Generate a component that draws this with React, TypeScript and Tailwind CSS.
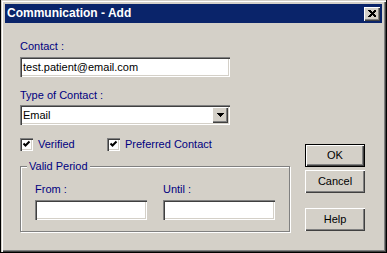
const sunken =
  "bg-white shadow-[inset_1px_1px_0_#808080,inset_2px_2px_0_#404040,inset_-1px_-1px_0_#ffffff,inset_-2px_-2px_0_#d4d0c8]";
const raised =
  "bg-[#d4d0c8] shadow-[inset_1px_1px_0_#ffffff,inset_-1px_-1px_0_#404040,inset_-2px_-2px_0_#808080]";

function TextField({ value, className }: { value?: string; className: string }) {
  return (
    <div className={`${sunken} ${className} h-[20px] flex items-center px-[3px] text-[11px] text-black`}>
      {value}
    </div>
  );
}

function CheckBox({ label, className }: { label: string; className?: string }) {
  return (
    <div className={`flex items-center gap-[5px] h-[13px] ${className ?? ""}`}>
      <div className={`${sunken} w-[13px] h-[13px] flex items-center justify-center`}>
        <svg width="9" height="9" viewBox="0 0 9 9">
          <path d="M1.5 3.5 L3.5 5.5 L7.5 1.5" fill="none" stroke="#000" strokeWidth="2" />
        </svg>
      </div>
      <span className="text-[11px] leading-[13px] text-[#000080]">{label}</span>
    </div>
  );
}

function Button({ label, isDefault }: { label: string; isDefault?: boolean }) {
  return (
    <div className={`w-[60px] h-[23px] ${isDefault ? "border border-black" : ""}`}>
      <div className={`${raised} w-full h-full flex items-center justify-center text-[11px] text-black`}>
        {label}
      </div>
    </div>
  );
}

export default function App() {
  return (
    <div
      className="w-[387px] h-[253px] border-l border-r border-b border-black bg-[#d4d0c8] text-[11px] leading-[13px]"
      style={{ fontFamily: '"Liberation Sans", Arial, sans-serif' }}
    >
      <div className="h-full p-[2px] shadow-[inset_1px_1px_0_#d4d0c8,inset_2px_2px_0_#ffffff,inset_-1px_-1px_0_#404040,inset_-2px_-2px_0_#808080]">
        <div className="h-full px-[2px] pt-[2px] flex flex-col">
          {/* title bar */}
          <div className="h-[19px] bg-[#0a246a] flex items-center pl-[2px] pr-[2px]">
            <span className="flex-1 text-white font-bold text-[12px]">Communication - Add</span>
            <div className={`${raised} w-[16px] h-[14px] flex items-center justify-center`}>
              <svg width="8" height="7" viewBox="0 0 8 7" shapeRendering="crispEdges">
                <path d="M0 0h2l2 2 2-2h2v1l-2.5 2.5L8 6v1H6L4 5 2 7H0V6l2.5-2.5L0 1z" fill="#000" />
              </svg>
            </div>
          </div>

          {/* body */}
          <div className="flex pl-[15px]">
            <div className="w-[270px] pt-[17px] flex flex-col">
              <div className="text-[#000080]">Contact :</div>
              <TextField value="test.patient@email.com" className="mt-[4px] w-[210px]" />

              <div className="mt-[12px] text-[#000080]">Type of Contact :</div>
              <div className={`${sunken} mt-[3px] w-[210px] h-[20px] flex items-center pl-[3px] pr-[2px]`}>
                <span className="flex-1 text-black">Email</span>
                <div className={`${raised} w-[16px] h-[16px] flex items-center justify-center`}>
                  <svg width="7" height="4" viewBox="0 0 7 4" shapeRendering="crispEdges">
                    <path d="M0 0h7L3.5 4z" fill="#000" />
                  </svg>
                </div>
              </div>

              <div className="mt-[13px] flex">
                <CheckBox label="Verified" className="w-[87px]" />
                <CheckBox label="Preferred Contact" />
              </div>

              <div className="relative mt-[15px] w-[270px] h-[66px] border border-[#808080] shadow-[inset_1px_1px_0_#ffffff,1px_1px_0_#ffffff] pl-[14px] pt-[16px]">
                <span className="absolute left-[6px] -top-[7px] px-[2px] bg-[#d4d0c8] text-[#000080]">
                  Valid Period
                </span>
                <div className="flex gap-[16px]">
                  <div className="flex flex-col">
                    <div className="text-[#000080]">From :</div>
                    <TextField className="mt-[4px] w-[112px]" />
                  </div>
                  <div className="flex flex-col">
                    <div className="text-[#000080]">Until :</div>
                    <TextField className="mt-[4px] w-[112px]" />
                  </div>
                </div>
              </div>
            </div>

            <div className="ml-[15px] pt-[121px] flex flex-col">
              <Button label="OK" isDefault />
              <div className="mt-[3px]">
                <Button label="Cancel" />
              </div>
              <div className="mt-[15px]">
                <Button label="Help" />
              </div>
            </div>
          </div>
        </div>
      </div>
    </div>
  );
}
